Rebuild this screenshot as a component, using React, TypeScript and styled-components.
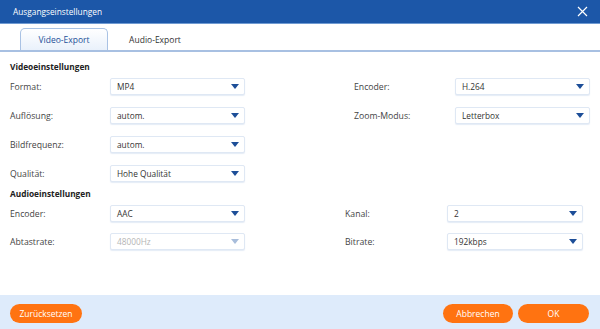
import React from "react";
import styled, { createGlobalStyle } from "styled-components";

const GlobalStyle = createGlobalStyle`
  html, body {
    margin: 0;
    padding: 0;
    background: #ffffff;
  }
  body {
    font-family: "Open Sans", "DejaVu Sans", sans-serif;
    font-size: 9px;
    color: #333333;
  }
`;

const Window = styled.div`
  width: 600px;
  height: 329px;
  display: flex;
  flex-direction: column;
  background: #ffffff;
  overflow: hidden;
`;

const TitleBar = styled.div`
  height: 23px;
  display: flex;
  align-items: center;
  justify-content: space-between;
  padding: 0 10px 0 13px;
  background: #1c57a8;
  border-bottom: 1px solid #6f9ad2;
  color: #ffffff;
  font-size: 8.3px;
`;

const CloseButton = styled.div`
  width: 12px;
  height: 12px;
  display: flex;
  align-items: center;
  justify-content: center;
  margin-right: 2px;
`;

const TabBar = styled.div`
  height: 24px;
  display: flex;
  align-items: flex-end;
  padding: 0 0 0 20px;
  border-bottom: 2px solid #a8c0e2;
  margin-top: 2px;
`;

const Tab = styled.div<{ $active?: boolean }>`
  width: ${({ $active }) => ($active ? "86px" : "92px")};
  height: 21px;
  display: flex;
  align-items: center;
  justify-content: center;
  border: 1px solid ${({ $active }) => ($active ? "#a9c2e4" : "transparent")};
  border-bottom: none;
  border-radius: 5px 5px 0 0;
  background: ${({ $active }) => ($active ? "linear-gradient(#ffffff, #e9f1fb)" : "transparent")};
  color: ${({ $active }) => ($active ? "#1c4f98" : "#333333")};
  font-size: 8.5px;
`;

const Body = styled.div`
  flex: 1;
  padding: 9px 10px 0 10px;
`;

const SectionTitle = styled.div`
  font-weight: bold;
  font-size: 8.3px;
  color: #222222;
  height: 12px;
  line-height: 12px;
  margin-bottom: 5px;
`;

const Row = styled.div<{ $gap?: number }>`
  height: 17px;
  display: flex;
  align-items: center;
  margin-bottom: ${({ $gap }) => $gap ?? 12}px;
`;

const Field = styled.div<{ $labelWidth: number; $offset?: number }>`
  display: flex;
  align-items: center;
  margin-left: ${({ $offset }) => $offset ?? 0}px;

  & > span {
    width: ${({ $labelWidth }) => $labelWidth}px;
    color: #444444;
    font-size: 8.7px;
  }
`;

const Select = styled.div<{ $disabled?: boolean; $width?: number }>`
  width: ${({ $width }) => $width ?? 135}px;
  height: 17px;
  box-sizing: border-box;
  display: flex;
  align-items: center;
  justify-content: space-between;
  padding: 0 4px 0 6px;
  background: #ffffff;
  border: 1px solid #dfe8f4;
  border-radius: 2px;
  box-shadow: 0 1px 1px rgba(180, 200, 230, 0.35);
  color: ${({ $disabled }) => ($disabled ? "#b5b5b5" : "#333333")};
  font-size: 8.3px;
`;

const Arrow = styled.div<{ $disabled?: boolean }>`
  width: 0;
  height: 0;
  border-left: 4px solid transparent;
  border-right: 4px solid transparent;
  border-top: 5px solid ${({ $disabled }) => ($disabled ? "#a8bddb" : "#1d4e98")};
  margin-right: 1px;
`;

const Footer = styled.div`
  height: 34px;
  display: flex;
  align-items: center;
  justify-content: space-between;
  padding: 0 11px 0 10px;
  background: #deebfb;
`;

const Buttons = styled.div`
  display: flex;
  gap: 5px;
`;

const Button = styled.div<{ $width: number }>`
  width: ${({ $width }) => $width}px;
  height: 19px;
  border-radius: 10px;
  background: #ff7311;
  color: #ffffff;
  font-size: 8.5px;
  display: flex;
  align-items: center;
  justify-content: center;
  margin-top: 2px;
`;

type SelectProps = { value: string; disabled?: boolean; width?: number };

const Dropdown = ({ value, disabled, width }: SelectProps) => (
  <Select $disabled={disabled} $width={width}>
    <span>{value}</span>
    <Arrow $disabled={disabled} />
  </Select>
);

const App = () => {
  return (
    <Window>
      <GlobalStyle />
      <TitleBar>
        <span>Ausgangseinstellungen</span>
        <CloseButton>
          <svg width="11" height="11" viewBox="0 0 11 11">
            <path d="M1 1 L10 10 M10 1 L1 10" stroke="#ffffff" strokeWidth="1.2" />
          </svg>
        </CloseButton>
      </TitleBar>
      <TabBar>
        <Tab $active>Video-Export</Tab>
        <Tab>Audio-Export</Tab>
      </TabBar>
      <Body>
        <SectionTitle>Videoeinstellungen</SectionTitle>
        <Row>
          <Field $labelWidth={100}>
            <span>Format:</span>
            <Dropdown value="MP4" />
          </Field>
          <Field $labelWidth={101} $offset={109}>
            <span>Encoder:</span>
            <Dropdown value="H.264" />
          </Field>
        </Row>
        <Row>
          <Field $labelWidth={100}>
            <span>Auflösung:</span>
            <Dropdown value="autom." />
          </Field>
          <Field $labelWidth={101} $offset={109}>
            <span>Zoom-Modus:</span>
            <Dropdown value="Letterbox" />
          </Field>
        </Row>
        <Row>
          <Field $labelWidth={100}>
            <span>Bildfrequenz:</span>
            <Dropdown value="autom." />
          </Field>
        </Row>
        <Row $gap={6}>
          <Field $labelWidth={100}>
            <span>Qualität:</span>
            <Dropdown value="Hohe Qualität" />
          </Field>
        </Row>
        <SectionTitle>Audioeinstellungen</SectionTitle>
        <Row $gap={11}>
          <Field $labelWidth={100}>
            <span>Encoder:</span>
            <Dropdown value="AAC" />
          </Field>
          <Field $labelWidth={102} $offset={100}>
            <span>Kanal:</span>
            <Dropdown value="2" width={136} />
          </Field>
        </Row>
        <Row>
          <Field $labelWidth={100}>
            <span>Abtastrate:</span>
            <Dropdown value="48000Hz" disabled />
          </Field>
          <Field $labelWidth={102} $offset={100}>
            <span>Bitrate:</span>
            <Dropdown value="192kbps" width={136} />
          </Field>
        </Row>
      </Body>
      <Footer>
        <Button $width={72}>Zurücksetzen</Button>
        <Buttons>
          <Button $width={70}>Abbrechen</Button>
          <Button $width={71}>OK</Button>
        </Buttons>
      </Footer>
    </Window>
  );
};

export default App;
